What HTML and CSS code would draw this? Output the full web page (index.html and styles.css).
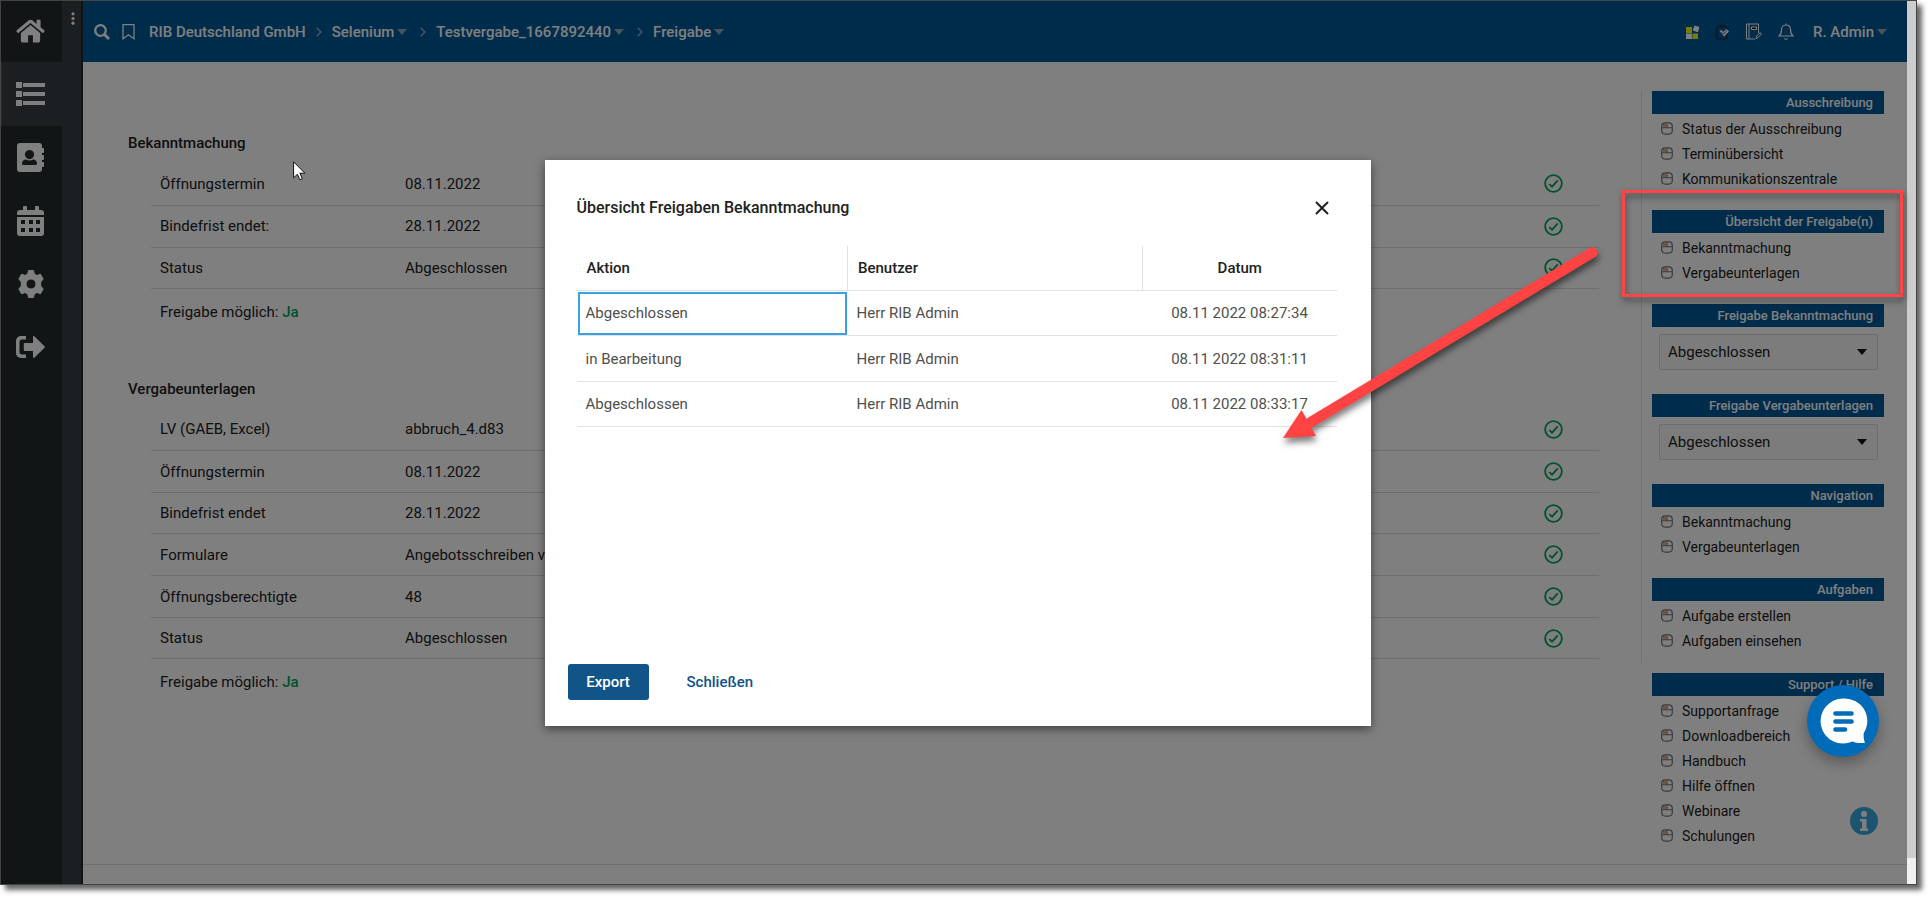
FILE: index.html
```html
<!DOCTYPE html>
<html lang="de">
<head>
<meta charset="utf-8">
<title>Freigabe – Testvergabe_1667892440</title>
<link rel="stylesheet" href="styles.css">
</head>
<body>
<svg class="defs" aria-hidden="true">
  <symbol id="check" viewBox="0 0 20 20"><circle cx="10" cy="10" r="8.8" fill="none" stroke="currentColor" stroke-width="1.9"/><path d="M5.6 10.6l2.9 2.8 6-6.6" fill="none" stroke="currentColor" stroke-width="1.9"/></symbol>
  <symbol id="mouse" viewBox="0 0 12 13"><path d="M2 2h3v3H2z" fill="#e8a878"/><rect x=".7" y=".9" width="10.600" height="11.200" rx="3.500" fill="none" stroke="#777" stroke-width="1.200"/><path d="M1 5.800h10M6 1v5" stroke="#777" stroke-width="1.100"/></symbol>
  <symbol id="caret" viewBox="0 0 10 6"><path d="M0 0h10L5 6z" fill="currentColor"/></symbol>
  <symbol id="chev" viewBox="0 0 6 10"><path d="M.7.7L5 5 .7 9.300" fill="none" stroke="currentColor" stroke-width="1.3"/></symbol>
</svg>
<div class="window">
  <div class="app">
    <nav class="rail" aria-label="Hauptmenü">
      <a href="#" class="rail-item rail-home" aria-label="Start"><svg width="29" height="25" viewBox="0 0 30 26"><path d="M15 6.300L5 14.500V23a1.500 1.500 0 0 0 1.500 1.500h6V17h5v7.500h6A1.500 1.500 0 0 0 25 23v-8.500z"/><path d="M15 .8c-.7 0-1.300.2-1.800.6L.7 11.800c-.4.3-.5.8-.2 1.200l1 1.200c.3.4.8.4 1.200.1L15 4.200l12.300 10.100c.4.3.9.3 1.200-.1l1-1.200c.3-.4.2-.9-.2-1.200L25.500 8.600V1.500c0-.5-.3-.8-.8-.8h-2.600c-.5 0-.8.3-.8.8v3.600l-4.500-3.700c-.5-.4-1.100-.6-1.800-.6z"/></svg></a>
      <a href="#" class="rail-item rail-active" aria-label="Liste"><svg width="29" height="26" viewBox="0 0 29 26"><path d="M0 1h6v6H0zM0 10h6v6H0zM0 19h6v6H0zM7 2h22v4H7zM7 11h22v4H7zM7 20h22v4H7z"/></svg></a>
      <a href="#" class="rail-item" aria-label="Kontakte"><svg width="27" height="29" viewBox="0 0 27 29"><path fill-rule="evenodd" d="M3 0h19a3 3 0 0 1 3 3v2h1a1 1 0 0 1 1 1v3a1 1 0 0 1-1 1h-1v2h1a1 1 0 0 1 1 1v3a1 1 0 0 1-1 1h-1v2h1a1 1 0 0 1 1 1v3a1 1 0 0 1-1 1h-1v2a3 3 0 0 1-3 3H3a3 3 0 0 1-3-3V3a3 3 0 0 1 3-3zm9.500 7a4.600 4.600 0 1 0 0 9.200 4.600 4.600 0 0 0 0-9.200zM9 16.500c-2.500 0-4 1.800-4 4 0 .9.600 1.500 1.500 1.500h12c.9 0 1.500-.6 1.500-1.500 0-2.200-1.500-4-4-4-1 .6-2.200.9-3.500.9s-2.500-.3-3.500-.9z"/></svg></a>
      <a href="#" class="rail-item" aria-label="Kalender"><svg width="27" height="30" viewBox="0 0 27 30"><path fill-rule="evenodd" d="M3 4h3V1a1 1 0 0 1 1-1h2a1 1 0 0 1 1 1v3h8V1a1 1 0 0 1 1-1h2a1 1 0 0 1 1 1v3h2a3 3 0 0 1 3 3v2H0V7a3 3 0 0 1 3-3zM0 11h27v16a3 3 0 0 1-3 3H3a3 3 0 0 1-3-3zm4 3v4h4v-4zm8 0v4h4v-4zm7 0v4h4v-4zM4 22v4h4v-4zm8 0v4h4v-4zm7 0v4h4v-4z"/></svg></a>
      <a href="#" class="rail-item" aria-label="Einstellungen"><svg width="28" height="28" viewBox="0 0 28 28"><path fill-rule="evenodd" stroke="#fff" stroke-width="1" stroke-linejoin="round" d="M11.500.5h5l.8 3.500 2.700 1.500 3.400-1.300 2.800 4.800-2.500 3v4l2.500 3-2.800 4.800-3.400-1.300-2.700 1.500-.8 3.500h-5l-.8-3.500L8 22.500l-3.400 1.300L1.800 19l2.500-3v-4l-2.500-3 2.800-4.800L8 5.500 10.700 4zM14 9a5 5 0 1 0 0 10 5 5 0 0 0 0-10z"/></svg></a>
      <a href="#" class="rail-item" aria-label="Abmelden"><svg width="29" height="22" viewBox="0 0 29 22"><path d="M10 0v3.500H6A2.500 2.500 0 0 0 3.500 6v10A2.500 2.500 0 0 0 6 18.500h4V22H5a5 5 0 0 1-5-5V5a5 5 0 0 1 5-5z"/><path d="M17 .8c0-.8.8-1 1.300-.5l10.200 10c.5.400.5 1 0 1.400l-10.200 10c-.5.500-1.300.3-1.300-.5V15H9a1.200 1.200 0 0 1-1.200-1.200V8.200C7.800 7.500 8.300 7 9 7h8z"/></svg></a>
    </nav>
    <div class="strip"><svg width="4" height="13" viewBox="0 0 4 13"><circle cx="2" cy="1.800" r="1.600"/><circle cx="2" cy="6.500" r="1.600"/><circle cx="2" cy="11.200" r="1.600"/></svg></div>
    <div class="page">
      <header class="topbar">
        <button type="button" class="tool" aria-label="Suchen"><svg width="16" height="16" viewBox="0 0 16 16" fill="none" stroke="#fff"><circle cx="6.500" cy="6.500" r="5.300" stroke-width="2.300"/><path d="M10.500 10.500l4.500 4.500" stroke-width="3"/></svg></button>
        <button type="button" class="tool tool-mark" aria-label="Merken"><svg width="13" height="16" viewBox="0 0 13 16"><path d="M1 .7h11v14L6.500 10.700 1 14.700z" fill="none" stroke="#fff" stroke-width="1.300"/></svg></button>
        <nav class="crumbs" aria-label="Pfad">
          <a href="#">RIB Deutschland GmbH</a>
          <svg class="chev"><use href="#chev"/></svg>
          <a href="#">Selenium<svg class="caret"><use href="#caret"/></svg></a>
          <svg class="chev"><use href="#chev"/></svg>
          <a href="#">Testvergabe_1667892440<svg class="caret"><use href="#caret"/></svg></a>
          <svg class="chev"><use href="#chev"/></svg>
          <a href="#">Freigabe<svg class="caret"><use href="#caret"/></svg></a>
        </nav>
        <div class="actions">
          <button type="button" class="tool" aria-label="Apps"><svg width="14" height="16" viewBox="0 0 14 16"><path d="M0 3h6v6H0zM6.500 9.500h5.500v5.500H6.500z" fill="#f4f410"/><path d="M0 9.500h6V15H0z" fill="#fff"/><rect x="7.500" y="2" width="5.500" height="5.500" rx="1" transform="rotate(20 10 4.500)" fill="#fff"/></svg></button>
          <button type="button" class="tool" aria-label="Aufgaben"><svg width="14" height="16" viewBox="0 0 14 16"><rect x="1" y="2.500" width="10" height="12.500" rx="1.500" fill="none" stroke="#26323c" stroke-width="1.600"/><path d="M3.500 3.500V1.800L5 .5h2l1.500 1.300v1.700z" fill="#26323c"/><path d="M3.500 7l2-1 1.500 2 3.500-3 2.500 2.500-5 5z" fill="#fff"/><path d="M5.500 8.200l1.800 2L10.500 7" fill="none" stroke="#005898"/></svg></button>
          <button type="button" class="tool" aria-label="Notizen"><svg width="16" height="17" viewBox="0 0 16 17" fill="none" stroke="#fff" stroke-width="1"><path d="M9 16H.5V1h12v9M3 1v15M10 15.500l.6-2.400 3.600-3.600 1.300 1.400-3.500 3.800z"/><path d="M5.500 4h5v2.500h-5z" fill="#111"/></svg></button>
          <button type="button" class="tool" aria-label="Mitteilungen"><svg width="16" height="17" viewBox="0 0 16 17" fill="none" stroke="#fff" stroke-width="1.200"><path d="M8 2c-3 0-4.500 2.200-4.500 4.800 0 3.500-1 5-2.500 6.200h14c-1.500-1.200-2.500-2.700-2.500-6.200C12.500 4.200 11 2 8 2zM8 2V.5M6.300 15.500c.8 1 2.600 1 3.400 0"/></svg></button>
          <button type="button" class="user">R. Admin<svg class="caret"><use href="#caret"/></svg></button>
        </div>
      </header>
      <div class="body">
        <main class="content">
          <section class="block">
            <h2>Bekanntmachung</h2>
            <table class="facts">
              <tr><th scope="row">Öffnungstermin</th><td>08.11.2022</td><td class="ok"><svg><use href="#check"/></svg></td></tr>
              <tr><th scope="row">Bindefrist endet:</th><td>28.11.2022</td><td class="ok"><svg><use href="#check"/></svg></td></tr>
              <tr><th scope="row">Status</th><td>Abgeschlossen</td><td class="ok"><svg><use href="#check"/></svg></td></tr>
            </table>
            <p>Freigabe möglich: <strong>Ja</strong></p>
          </section>
          <section class="block">
            <h2>Vergabeunterlagen</h2>
            <table class="facts">
              <tr><th scope="row">LV (GAEB, Excel)</th><td>abbruch_4.d83</td><td class="ok"><svg><use href="#check"/></svg></td></tr>
              <tr><th scope="row">Öffnungstermin</th><td>08.11.2022</td><td class="ok"><svg><use href="#check"/></svg></td></tr>
              <tr><th scope="row">Bindefrist endet</th><td>28.11.2022</td><td class="ok"><svg><use href="#check"/></svg></td></tr>
              <tr><th scope="row">Formulare</th><td>Angebotsschreiben vo</td><td class="ok"><svg><use href="#check"/></svg></td></tr>
              <tr><th scope="row">Öffnungsberechtigte</th><td>48</td><td class="ok"><svg><use href="#check"/></svg></td></tr>
              <tr><th scope="row">Status</th><td>Abgeschlossen</td><td class="ok"><svg><use href="#check"/></svg></td></tr>
            </table>
            <p>Freigabe möglich: <strong>Ja</strong></p>
          </section>
        </main>
        <aside class="side">
          <div class="side-top">
            <section class="group"><h3>Ausschreibung</h3>
              <a href="#"><svg><use href="#mouse"/></svg>Status der Ausschreibung</a>
              <a href="#"><svg><use href="#mouse"/></svg>Terminübersicht</a>
              <a href="#"><svg><use href="#mouse"/></svg>Kommunikationszentrale</a></section>
            <section class="group"><h3>Übersicht der Freigabe(n)</h3>
              <a href="#"><svg><use href="#mouse"/></svg>Bekanntmachung</a>
              <a href="#"><svg><use href="#mouse"/></svg>Vergabeunterlagen</a></section>
            <section class="group group-pick"><h3><label for="fb">Freigabe Bekanntmachung</label></h3>
              <div class="pick"><select id="fb"><option>Abgeschlossen</option></select><svg class="caret"><use href="#caret"/></svg></div></section>
            <section class="group group-pick"><h3><label for="fv">Freigabe Vergabeunterlagen</label></h3>
              <div class="pick"><select id="fv"><option>Abgeschlossen</option></select><svg class="caret"><use href="#caret"/></svg></div></section>
            <section class="group"><h3>Navigation</h3>
              <a href="#"><svg><use href="#mouse"/></svg>Bekanntmachung</a>
              <a href="#"><svg><use href="#mouse"/></svg>Vergabeunterlagen</a></section>
            <section class="group group-last"><h3>Aufgaben</h3>
              <a href="#"><svg><use href="#mouse"/></svg>Aufgabe erstellen</a>
              <a href="#"><svg><use href="#mouse"/></svg>Aufgaben einsehen</a></section>
          </div>
          <section class="group group-help"><h3>Support / Hilfe</h3>
            <a href="#"><svg><use href="#mouse"/></svg>Supportanfrage</a>
            <a href="#"><svg><use href="#mouse"/></svg>Downloadbereich</a>
            <a href="#"><svg><use href="#mouse"/></svg>Handbuch</a>
            <a href="#"><svg><use href="#mouse"/></svg>Hilfe öffnen</a>
            <a href="#"><svg><use href="#mouse"/></svg>Webinare</a>
            <a href="#"><svg><use href="#mouse"/></svg>Schulungen</a></section>
        </aside>
      </div>
      <footer class="foot"></footer>
    </div>
    <button type="button" class="info" aria-label="Information"><svg width="28" height="28" viewBox="0 0 28 28"><circle cx="14" cy="14" r="14" fill="#38a8e0"/><circle cx="14" cy="7" r="3" fill="#fff"/><path d="M10 12h6.500v9.500H18V24h-8v-2.500h2v-7h-2z" fill="#fff"/></svg></button>
    <div class="overlay">
      <div class="dialog" role="dialog" aria-labelledby="dlg">
        <div class="dialog-head"><h1 id="dlg">Übersicht Freigaben Bekanntmachung</h1>
          <button type="button" class="close" aria-label="Dialog schließen"><svg width="14" height="14" viewBox="0 0 14 14"><path d="M1 1l12 12M13 1L1 13" stroke="#212121" stroke-width="2"/></svg></button></div>
        <table class="log">
          <colgroup><col class="c1"><col><col class="c3"></colgroup>
          <thead><tr><th scope="col">Aktion</th><th scope="col">Benutzer</th><th scope="col">Datum</th></tr></thead>
          <tbody>
            <tr><td class="focus">Abgeschlossen</td><td>Herr RIB Admin</td><td>08.11 2022 08:27:34</td></tr>
            <tr><td>in Bearbeitung</td><td>Herr RIB Admin</td><td>08.11 2022 08:31:11</td></tr>
            <tr><td>Abgeschlossen</td><td>Herr RIB Admin</td><td>08.11 2022 08:33:17</td></tr>
          </tbody>
        </table>
        <div class="dialog-foot"><button type="button" class="primary">Export</button><button type="button" class="plain">Schließen</button></div>
      </div>
    </div>
    <button type="button" class="chat" aria-label="Chat"><svg width="72" height="72" viewBox="0 0 72 72"><path d="M36 13.500a22.500 22.500 0 1 0 9.500 42.900c3.500 1.500 8 2 12.500 1.300-1-2.200-1.600-5.500-1.300-9.500A22.500 22.500 0 0 0 36 13.500z" fill="#fff"/><path d="M28.500 28.500h16M28.500 36.500h16M28.500 44.500h9.500" stroke="#006bb8" stroke-width="4.600" stroke-linecap="round"/></svg></button>
  </div>
  <div class="scroll"><div class="thumb"></div></div>
  <div class="mark"></div>
  <svg class="arrow" width="330" height="205" viewBox="0 0 330 205"><path d="M321.500 12.500L40 182" stroke="#ff4343" stroke-width="10.500" stroke-linecap="round"/><path d="M12 198l18.500-28L45 196z" fill="#ff4343"/></svg>
  <svg class="pointer" width="13" height="20" viewBox="0 0 13 20"><path d="M.6.800v16l3.800-3.500 2.500 5.400 2.400-1-2.400-5.500h5z" fill="#fff" stroke="#111" stroke-width="1"/></svg>
</div>
</body>
</html>
```
FILE: styles.css
```css
* { box-sizing: border-box; }
html, body { height: 100%; }
body { margin: 0; padding: 0 15px 15px 0; background: #fff; color: #212121; font: 15px/20px Roboto, "Liberation Sans", sans-serif; overflow: hidden; }
h1, h2, h3, p { margin: 0; }
a { color: inherit; text-decoration: none; }
button { padding: 0; border: 0; background: none; color: inherit; font: inherit; cursor: pointer; }
svg { display: block; flex: none; }
.defs { position: absolute; width: 0; height: 0; }

.window { position: relative; display: flex; height: 100%; border: 1px solid #444; box-shadow: 5px 5px 5px rgba(0, 0, 0, .6); }
.app { position: relative; display: flex; flex: 1; min-width: 0; overflow: hidden; background: #fff; }
.scroll { width: 9px; background: #f0f0f0; }
.thumb { height: 97%; background: #cdcdcd; }

.rail { display: flex; flex-direction: column; width: 61px; background: #222b2c; }
.rail-item { display: flex; align-items: center; justify-content: center; height: 63px; padding-right: 2px; }
.rail-item svg { fill: #fff; }
.rail-home { height: 61px; }
.rail-active { height: 64px; background: #363e42; box-shadow: inset 1px 0 #0a6ea0; }
.strip { display: flex; justify-content: center; width: 21px; padding: 11px 0 0 2px; background: #363e42; border-right: 2px solid #23282e; }
.strip svg { fill: #fff; }

.page { display: flex; flex-direction: column; flex: 1; min-width: 0; }
.topbar { display: flex; flex: none; align-items: center; height: 61px; padding: 0 20px 0 11px; background: #005898; color: #fff; font-weight: 500; }
.tool-mark { margin-left: 12px; }
.crumbs { display: flex; align-items: center; gap: 10px; margin-left: 14px; }
.crumbs a, .user { display: flex; align-items: center; gap: 3px; }
.caret { width: 10px; height: 6px; color: #8ea6ba; }
.chev { width: 6px; height: 10px; color: #8fb0cc; }
.crumbs a:has(.caret) + .chev { margin-left: 3px; }
.actions { display: flex; align-items: center; gap: 16px; margin-left: auto; }
.user { margin-left: 3px; }

.body { display: flex; flex: 1; gap: 42px; min-height: 0; padding: 29px 23px 0 45px; }
.content { flex: 1; min-width: 0; padding-top: 42px; }
.block { margin-bottom: 57px; }
h2 { font-size: 15px; line-height: 20px; font-weight: 500; }
.facts { width: calc(100% - 23px); margin: 10px 0 0 23px; border-collapse: collapse; table-layout: fixed; }
.facts tr { height: 42px; border-bottom: 1px solid #dcdcdc; }
.facts tr:nth-child(3n) { height: 41px; }
.facts th { width: 254px; padding: 0 9px; text-align: left; font-weight: 400; }
.facts td { padding: 0; }
.facts .ok { width: 55px; color: #00a35c; }
.ok svg { width: 19px; height: 19px; }
.block p { padding: 13px 0 0 32px; }
.block strong { color: #00a35c; font-weight: 500; }

.side { width: 243px; font-size: 14px; }
.side-top { border-left: 1px solid #e2e2e2; padding-left: 10px; }
.group { padding-bottom: 19px; }
.group-pick { padding-bottom: 24px; }
.group-last { padding-bottom: 10px; }
.group-help { margin-top: 10px; padding-left: 11px; }
.group h3 { height: 23px; margin-bottom: 2px; padding-right: 11px; background: #005898; color: #fff; text-align: right; font-size: 13px; line-height: 23px; font-weight: 500; }
.group a { display: flex; align-items: center; gap: 9px; height: 25px; padding-left: 9px; }
.group a svg { width: 12px; height: 13px; }
.pick { position: relative; margin: 7px 6px 0 7px; }
.group-pick h3 { margin-bottom: 0; }
.pick select { display: block; width: 100%; height: 36px; padding: 0 8px; appearance: none; border: 1px solid #dadada; border-radius: 2px; background: #f8f8f8; color: #212121; font: 15px/20px Roboto, "Liberation Sans", sans-serif; }
.pick .caret { position: absolute; right: 11px; top: 15px; color: #111; }
.foot { flex: none; height: 20px; border-top: 1px solid #e0e0e0; }

.overlay { position: absolute; inset: 0; display: grid; place-items: center; padding-left: 7px; background: rgba(0, 0, 0, .5); }
.dialog { display: flex; flex-direction: column; width: 826px; max-width: 90%; min-height: 566px; padding: 36px 34px 26px 32px; background: #fff; box-shadow: 0 3px 9px rgba(0, 0, 0, .5); }
.dialog-head { display: flex; align-items: center; justify-content: space-between; height: 24px; padding-right: 8px; }
h1 { font-size: 16px; line-height: 24px; font-weight: 500; }
.log { width: 100%; margin-top: 26px; border-collapse: collapse; table-layout: fixed; color: #4f4f4f; }
.c1 { width: 271px; }
.c3 { width: 194px; }
.log tr { height: 45px; border-bottom: 1px solid #e2e2e2; }
.log tr:nth-child(2) { height: 46px; }
.log th { padding: 0 10px; text-align: left; font-weight: 500; color: #212121; }
.log th + th { border-left: 1px solid #e2e2e2; }
.log td { padding: 0 9px; }
.log th:last-child, .log td:last-child { text-align: center; }
.log .focus { outline: 2px solid #38a2e2; outline-offset: -3px; }
.dialog-foot { display: flex; gap: 38px; margin: auto 0 0 -9px; }
.dialog-foot button { height: 36px; font-weight: 500; }
.dialog-foot .primary { width: 81px; border-radius: 3px; background: #105488; color: #fff; }
.dialog-foot .plain { color: #105488; }

.chat { position: absolute; right: 28px; bottom: 127px; width: 72px; height: 72px; border-radius: 50%; background: #006bb8; box-shadow: 0 6px 14px rgba(0, 0, 0, .3); }
.info { position: absolute; right: 29px; bottom: 49px; }
.mark { position: absolute; right: 13px; top: 189px; width: 281px; height: 107px; border: 3px solid #ff4545; filter: drop-shadow(1px 4px 3px rgba(0, 0, 0, .5)); }
.arrow { position: absolute; right: 315px; top: 239px; filter: drop-shadow(1px 5px 3px rgba(0, 0, 0, .5)); }
.pointer { position: absolute; left: 292px; top: 160px; }
```
